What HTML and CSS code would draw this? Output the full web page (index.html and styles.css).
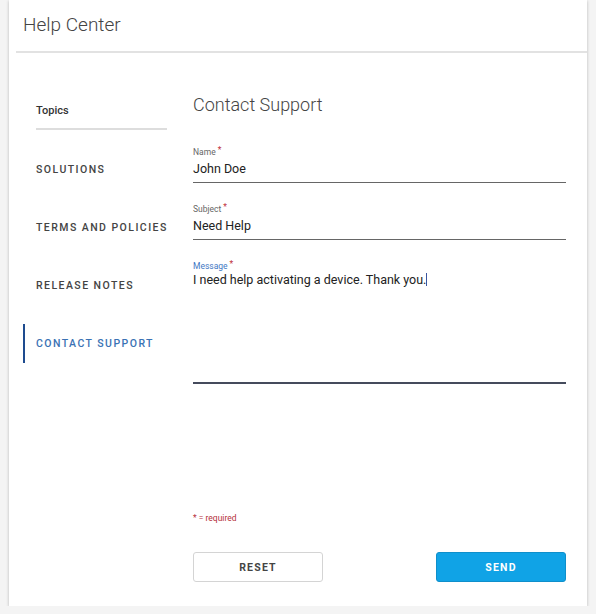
FILE: index.html
```html
<!DOCTYPE html>
<html lang="en">
<head>
  <meta charset="UTF-8" />
  <title>Help Center</title>
  <link rel="stylesheet" href="styles.css">
</head>
<body>
<div class="card">
  <header class="card-header">Help Center</header>
  <div class="card-body">
    <nav class="sidebar">
      <div class="topics">Topics</div>
      <a class="nav-item">SOLUTIONS</a>
      <a class="nav-item">TERMS AND POLICIES</a>
      <a class="nav-item">RELEASE NOTES</a>
      <a class="nav-item active">CONTACT SUPPORT</a>
    </nav>
    <main class="content">
      <h2>Contact Support</h2>
      <div class="field">
        <label>Name<span class="req">*</span></label>
        <div class="value">John Doe</div>
      </div>
      <div class="field">
        <label>Subject<span class="req">*</span></label>
        <div class="value">Need Help</div>
      </div>
      <div class="field message">
        <label>Message<span class="req">*</span></label>
        <div class="value">I need help activating a device. Thank you.<span class="caret"></span></div>
      </div>
      <p class="required-note">* = required</p>
      <div class="actions">
        <button class="btn reset">RESET</button>
        <button class="btn send">SEND</button>
      </div>
    </main>
  </div>
</div>
</body>
</html>
```

FILE: styles.css
```css
body {
  margin: 0;
  background: #f4f4f4;
  font-family: Roboto, "Liberation Sans", sans-serif;
  color: #333;
}
.card {
  margin-left: 9px;
  width: 578px;
  height: 606px;
  background: #fff;
  box-shadow: 0 1px 3px rgba(0,0,0,0.25);
  box-sizing: border-box;
}
.card-header {
  margin-left: 7px;
  padding: 13px 0 0 7px;
  height: 38px;
  border-bottom: 2px solid #e2e2e2;
  font-size: 19px;
  font-weight: 300;
  color: #444;
}
.card-body {
  display: flex;
}
.sidebar {
  width: 170px;
  padding-top: 51px;
  display: flex;
  flex-direction: column;
}
.topics {
  margin-left: 27px;
  width: 131px;
  font-size: 11px;
  font-weight: 500;
  color: #333;
  padding-bottom: 11px;
  border-bottom: 2px solid #ddd;
}
.nav-item {
  display: block;
  margin: 19px 0 0 14px;
  padding: 13px 0 13px 11px;
  line-height: 13px;
  border-left: 2px solid transparent;
  font-size: 10.5px;
  font-weight: 500;
  letter-spacing: 1.45px;
  color: #444;
}
.nav-item:first-of-type {
  margin-top: 20px;
}
.nav-item.active {
  border-left-color: #1e4b8f;
  color: #3a72b4;
}
.content {
  width: 373px;
  margin-left: 14px;
  padding-top: 41px;
}
h2 {
  margin: 0 0 30px;
  font-size: 18px;
  font-weight: 300;
  color: #444;
}
.field {
  margin-bottom: 19px;
  border-bottom: 1.5px solid #666;
  padding-bottom: 5px;
}
.field label {
  display: block;
  font-size: 8.5px;
  color: #666;
  line-height: 11px;
}
.req {
  color: #c0303a;
  margin-left: 2px;
  vertical-align: 2px;
}
.field .value {
  margin-top: 2px;
  font-size: 12.5px;
  color: #222;
  line-height: 17px;
}
.message {
  height: 125px;
  border-bottom: 2px solid #454b5c;
  padding-bottom: 0;
  box-sizing: border-box;
}
.message label {
  color: #3f78c4;
}
.message .value {
  margin-top: -1px;
}
.caret {
  display: inline-block;
  width: 1px;
  height: 13px;
  background: #3a55a0;
  vertical-align: -2px;
}
.required-note {
  margin: 129px 0 0;
  font-size: 8.5px;
  color: #b5303a;
}
.actions {
  display: flex;
  justify-content: space-between;
  margin-top: 29px;
}
.btn {
  width: 130px;
  height: 30px;
  border-radius: 3px;
  font-family: Roboto, "Liberation Sans", sans-serif;
  font-size: 10.5px;
  font-weight: 700;
  letter-spacing: 1.2px;
}
.reset {
  background: #fff;
  border: 1px solid #d4d4d4;
  color: #444;
}
.send {
  background: #10a3e6;
  border: 1px solid #0f8fcb;
  color: #fff;
}
```
